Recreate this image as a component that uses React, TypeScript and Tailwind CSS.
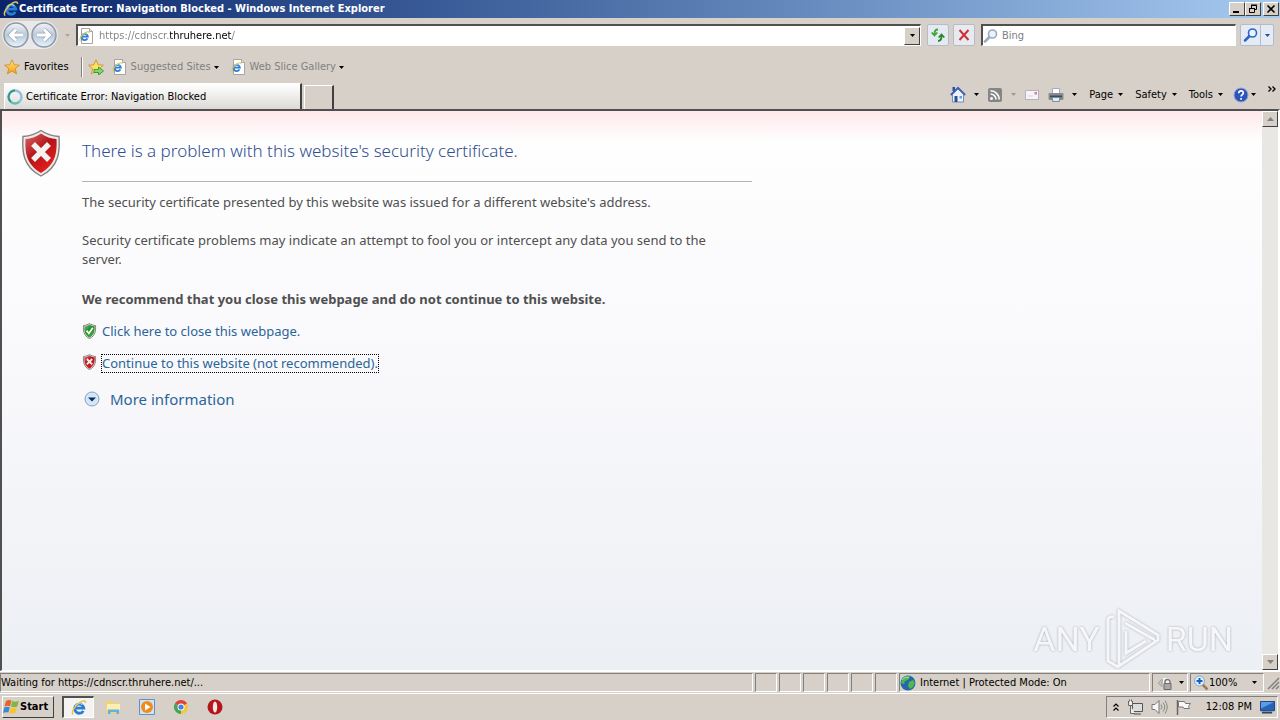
import type { ReactNode } from 'react';

const raised =
  'border border-t-white border-l-white border-r-[#404040] border-b-[#404040] bg-[#d6d0c8]';
const sunken =
  'border border-t-[#808080] border-l-[#808080] border-r-white border-b-white';

function Caret({ className = 'text-black' }: { className?: string }) {
  return (
    <svg aria-hidden="true" className={`shrink-0 ${className}`} width="5" height="3" viewBox="0 0 5 3">
      <path d="M0 0h5L2.5 3z" fill="currentColor" />
    </svg>
  );
}

function IeLogo({ size = 14 }: { size?: number }) {
  return (
    <svg aria-hidden="true" className="shrink-0" width={size} height={size} viewBox="0 0 16 16">
      <path
        d="M12.3 10.800a4.600 4.600 0 1 1 .5-2.600H4.500"
        fill="none"
        stroke="#2a7fd4"
        strokeWidth="2.800"
      />
      <path d="M4 6.200a4.600 4.600 0 0 1 7.400-1.400" fill="none" stroke="#8fd0f8" strokeWidth="1.200" />
      <path
        d="M2.200 14.600C-.6 13 4 5 9.400 2.200c3-1.600 5.600-1.600 5 .8"
        fill="none"
        stroke="#f0c04c"
        strokeWidth="1.500"
      />
    </svg>
  );
}

function IePage() {
  return (
    <span className="relative block size-4 shrink-0">
      <svg aria-hidden="true" className="absolute inset-0" width="16" height="16" viewBox="0 0 16 16">
        <path d="M2.500.5h8l3 3v12h-11z" fill="#fff" stroke="#a5a5a5" />
        <path d="M10.500.5v3h3" fill="#e4e4e4" stroke="#a5a5a5" />
      </svg>
      <span className="absolute top-[3px] left-0">
        <IeLogo size={11} />
      </span>
    </span>
  );
}

function Shield({
  size,
  tone,
}: {
  size: 'lg' | 'sm';
  tone: 'red' | 'green';
}) {
  const id = `shield-${size}-${tone}`;
  return (
    <svg
      aria-hidden="true"
      className={size === 'lg' ? 'h-12 w-10 shrink-0' : 'mb-0.5 h-4 w-[15px] shrink-0'}
      viewBox="0 0 40 48"
    >
      <defs>
        <linearGradient id={id} x1="0" y1="0" x2=".7" y2="1">
          <stop offset="0" stopColor={tone === 'red' ? '#d96a6a' : '#7cc07c'} />
          <stop offset=".5" stopColor={tone === 'red' ? '#b51218' : '#1f8a24'} />
          <stop offset="1" stopColor={tone === 'red' ? '#e8211c' : '#3cb43c'} />
        </linearGradient>
      </defs>
      <path
        d="M20 1.500C25 5 31 7 38 7.500c1 14 .5 30-18 39.500C1.500 37.500 1 21.500 2 7.500 9 7 15 5 20 1.500z"
        fill="#eceaea"
        stroke="#85827f"
        strokeWidth={size === 'lg' ? 1.4 : 3}
      />
      <path
        d="M20 4.500C25 8 30 9.500 35.500 10c.6 12 0 25-15.500 34C4.500 35 4 22 4.500 10 10 9.500 15 8 20 4.500z"
        fill={`url(#${id})`}
      />
      {tone === 'red' ? (
        <path d="M12 15l16 16M28 15L12 31" stroke="#f4f1f1" strokeWidth="5.500" />
      ) : (
        <path d="M11 23l7 8L30 14" fill="none" stroke="#fff" strokeWidth="5" />
      )}
    </svg>
  );
}

function Star({ arrow = false }: { arrow?: boolean }) {
  return (
    <svg aria-hidden="true" className="shrink-0" width="16" height="16" viewBox="0 0 16 16">
      <defs>
        <linearGradient id="star" x1="0" y1="0" x2="0" y2="1">
          <stop offset="0" stopColor="#ffe98a" />
          <stop offset="1" stopColor="#f49a12" />
        </linearGradient>
      </defs>
      <path
        d="M8 .8l2.100 5 5.300.4-4.100 3.400 1.300 5.300L8 12l-4.600 2.900 1.300-5.300L.6 6.200l5.300-.4z"
        fill={arrow ? '#fbe26a' : 'url(#star)'}
        stroke="#d08a18"
        strokeWidth=".8"
      />
      {arrow && (
        <path
          d="M6 10.500h4.500V8l5 4-5 4v-2.500H6z"
          fill="#7fdc62"
          stroke="#2a8a22"
          strokeWidth=".8"
        />
      )}
    </svg>
  );
}

function NavButton({ forward = false }: { forward?: boolean }) {
  const arrow = forward
    ? 'M7 14h12M14 8.500l5.500 5.500-5.500 5.500'
    : 'M21 14H9M14 8.500L8.500 14l5.500 5.500';
  return (
    <button
      type="button"
      aria-label={forward ? 'Forward' : 'Back'}
      className="size-7 shrink-0"
    >
      <svg aria-hidden="true" width="28" height="28" viewBox="0 0 28 28">
        <defs>
          <linearGradient id="orb" x1="0" y1="0" x2="0" y2="1">
            <stop offset="0" stopColor="#f2f4f8" />
            <stop offset=".5" stopColor="#bcc9d8" />
            <stop offset="1" stopColor="#e6f5fd" />
          </linearGradient>
        </defs>
        <circle cx="14" cy="14" r="12" fill="url(#orb)" stroke="#8f97a6" strokeWidth="1.500" />
        <path d={arrow} fill="none" stroke="#9aa8b8" strokeWidth="4.500" />
        <path d={arrow} fill="none" stroke="#fff" strokeWidth="3" />
      </svg>
    </button>
  );
}

function Magnifier({ color }: { color: string }) {
  return (
    <svg aria-hidden="true" className="shrink-0" width="16" height="16" viewBox="0 0 16 16">
      <path d="M6.500 9L2 13.500" stroke={color} strokeWidth="2.500" strokeLinecap="round" />
      <circle cx="9.500" cy="6" r="4" fill="#e8f3fc" stroke={color} strokeWidth="1.600" />
    </svg>
  );
}

function TitleBar() {
  return (
    <header className="flex h-[18px] items-center bg-linear-to-r from-[#0a246a] to-[#a6caf0] pr-px pl-[3px]">
      <IeLogo size={16} />
      <h1 className="flex-1 truncate font-[DejaVu_Sans_Condensed,sans-serif] text-[11px] leading-4 font-bold text-white">
        Certificate Error: Navigation Blocked - Windows Internet Explorer
      </h1>
      <button type="button" aria-label="Minimize" className={`h-[14px] w-4 ${raised}`}>
        <svg aria-hidden="true" width="14" height="12" viewBox="0 0 14 12">
          <path d="M3 8h6v2H3z" />
        </svg>
      </button>
      <button type="button" aria-label="Restore" className={`h-[14px] w-4 ${raised}`}>
        <svg aria-hidden="true" width="14" height="12" viewBox="0 0 14 12">
          <path
            d="M5.500 5V2.500h5v4H9M5 2h6M3.500 5.500h5v4h-5zM3 5.500h6"
            fill="none"
            stroke="#000"
          />
        </svg>
      </button>
      <button type="button" aria-label="Close" className={`ml-0.5 h-[14px] w-4 ${raised}`}>
        <svg aria-hidden="true" width="14" height="12" viewBox="0 0 14 12">
          <path d="M3.500 2.500l7 7M10.500 2.500l-7 7" stroke="#000" strokeWidth="1.600" />
        </svg>
      </button>
    </header>
  );
}

function AddressRow() {
  return (
    <div className="flex h-9 items-center pr-1.5 pb-0.5 pl-0.5">
      <div className="flex rounded-full bg-[#e9e9ea]">
        <NavButton />
        <NavButton forward />
      </div>
      <button type="button" aria-label="Recent pages" className="flex w-[18px] justify-center">
        <Caret className="text-[#aaa6a0]" />
      </button>
      <div className="flex h-[22px] min-w-0 flex-1 items-center border-t-2 border-r border-b border-l-2 border-t-[#505050] border-r-white border-b-white border-l-[#505050] bg-white pl-px">
        <IePage />
        {/* host part is darker than the rest of the URL */}
        <input
          aria-label="Address"
          defaultValue="https://cdnscr.thruhere.net/"
          className="ml-1 h-[18px] min-w-0 flex-1 bg-[linear-gradient(to_right,#808080_71px,#000_71px,#000_133px,#808080_133px)] bg-clip-text leading-[18px] text-transparent outline-none"
        />
        <button
          type="button"
          aria-label="Show address list"
          className={`flex h-[18px] w-4 items-center justify-center ${raised}`}
        >
          <Caret />
        </button>
      </div>
      <button
        type="button"
        aria-label="Refresh"
        className="ml-1.5 flex size-[22px] items-center justify-center rounded-xs border border-[#b3bccb] bg-[#e4eaf2]"
      >
        <svg aria-hidden="true" width="16" height="16" viewBox="0 0 16 16">
          <path
            d="M8 2.500Q4.500 2.500 4.500 7M1.700 5.500l2.800 3 2.800-3"
            fill="none"
            stroke="#3fa535"
            strokeWidth="1.800"
          />
          <path
            d="M8 14q3.500 0 3.500-5M8.700 10.500l2.800-3 2.800 3"
            fill="none"
            stroke="#26852a"
            strokeWidth="1.800"
          />
        </svg>
      </button>
      <button
        type="button"
        aria-label="Stop"
        className="ml-1 flex size-[22px] items-center justify-center rounded-xs border border-[#b3bccb] bg-[#e9e9f0]"
      >
        <svg aria-hidden="true" width="14" height="14" viewBox="0 0 14 14">
          <path d="M2.500 2l9 10M11.500 2l-9 10" stroke="#cc3238" strokeWidth="2" />
        </svg>
      </button>
      <div className="ml-1.5 flex h-[22px] w-[255px] items-center border-t-2 border-r border-b border-l-2 border-t-[#505050] border-r-white border-b-white border-l-[#505050] bg-white">
        <Magnifier color="#9aaabd" />
        <input
          aria-label="Search"
          placeholder="Bing"
          className="ml-[3px] h-[18px] min-w-0 flex-1 leading-[18px] outline-none placeholder:text-[#808080]"
        />
      </div>
      <div className="ml-1 flex h-[22px] rounded-xs border border-[#b3bccb] bg-[#e4ebf5]">
        <button
          type="button"
          aria-label="Search"
          className="flex w-5 items-center justify-center border-r border-[#b3bccb]"
        >
          <Magnifier color="#2c63c8" />
        </button>
        <button
          type="button"
          aria-label="Search options"
          className="flex w-3 items-center justify-center"
        >
          <Caret className="text-[#1f4f9c]" />
        </button>
      </div>
    </div>
  );
}

function FavoritesBar() {
  return (
    <nav aria-label="Favorites" className="flex h-[26px] items-center pl-1">
      <button type="button" className="flex items-center gap-1">
        <Star />
        Favorites
      </button>
      <span className="ml-3 h-5 w-0.5 border-r border-l border-r-white border-l-[#808080]" />
      <button type="button" aria-label="Add to Favorites Bar" className="ml-[5px]">
        <Star arrow />
      </button>
      <button type="button" className="ml-2 flex items-center gap-[3px] text-[#808080]">
        <IePage />
        Suggested Sites
        <Caret />
      </button>
      <button type="button" className="ml-3 flex items-center gap-[3px] text-[#808080]">
        <IePage />
        Web Slice Gallery
        <Caret />
      </button>
    </nav>
  );
}

function MenuButton({ children }: { children: ReactNode }) {
  return (
    <button type="button" className="flex items-center gap-[5px]">
      {children}
      <Caret />
    </button>
  );
}

function TabRow() {
  return (
    <div className="flex h-[29px] items-end pl-1">
      <div role="tablist" className="flex items-end">
        <button
          type="button"
          role="tab"
          aria-selected="true"
          className="flex h-[26px] w-[298px] items-center gap-[3px] border-t border-r-2 border-l border-t-white border-r-[#404040] border-l-white bg-linear-to-b from-white to-[#dcdad6] pl-0.5"
        >
          <svg aria-hidden="true" width="16" height="16" viewBox="0 0 16 16">
            <circle cx="8" cy="8" r="6.500" fill="none" stroke="#8fc4dc" strokeWidth="2.500" />
            <path d="M8 1.500a6.500 6.500 0 0 0-4 11.500" fill="none" stroke="#35968c" strokeWidth="2" />
            <path d="M4 13a6.500 6.500 0 0 0 8 0" fill="none" stroke="#5cc0a8" strokeWidth="2" />
          </svg>
          Certificate Error: Navigation Blocked
        </button>
        <button
          type="button"
          aria-label="New Tab"
          className="ml-0.5 h-6 w-[30px] border-t border-r-2 border-l border-t-white border-r-[#404040] border-l-white"
        />
      </div>
      <div className="ml-auto flex h-[29px] items-center pr-1">
        <button type="button" aria-label="Home" className="flex items-center gap-2">
          <svg aria-hidden="true" width="16" height="17" viewBox="0 0 16 17">
            <path d="M2.500 8v8h11V8L8 3z" fill="#eef3fb" stroke="#7b8db0" />
            <path d="M2.500 1h2.500v4H2.500z" fill="#2c4ea8" />
            <path d="M.8 9L8 1.800 15.200 9" fill="none" stroke="#3a62bd" strokeWidth="1.800" />
            <path d="M4.500 10h3v6h-3z" fill="#2b4f96" />
            <path d="M9.500 10H12v2.500H9.500z" fill="#5aa4dc" />
          </svg>
          <Caret />
        </button>
        <button type="button" aria-label="Feeds" className="ml-2 flex items-center gap-2">
          <svg aria-hidden="true" width="16" height="16" viewBox="0 0 16 16">
            <rect x="1" y="1" width="14" height="14" rx="2" fill="#858585" />
            <circle cx="4.500" cy="11.500" r="1.500" fill="#fff" />
            <path
              d="M3.500 7a5.500 5.500 0 0 1 5.500 5.500M3.500 3.800a8.700 8.700 0 0 1 8.700 8.700"
              fill="none"
              stroke="#fff"
              strokeWidth="1.600"
            />
          </svg>
          <Caret className="text-[#999]" />
        </button>
        <button type="button" aria-label="Read mail" className="ml-2">
          <svg aria-hidden="true" width="16" height="12" viewBox="0 0 16 12">
            <path d="M1.500 1.500h13v9h-13z" fill="#f6f4f8" stroke="#b8b0bc" />
            <path d="M10.500 3h2.500v2.500h-2.500z" fill="#d4808c" />
            <path d="M4 7h5" stroke="#d8d4e0" />
          </svg>
        </button>
        <button type="button" aria-label="Print" className="ml-2 flex items-center gap-2">
          <svg aria-hidden="true" width="16" height="16" viewBox="0 0 16 16">
            <path d="M4.500 1.500h7v5h-7z" fill="#fff" stroke="#a5adba" />
            <rect x=".5" y="6" width="15" height="7" rx="1" fill="#878d96" />
            <path d="M2 8.500h12v2H2z" fill="#454b56" />
            <path d="M4.500 10.500h7v4h-7z" fill="#dcecf9" stroke="#7f8d9c" />
          </svg>
          <Caret />
        </button>
        <div className="ml-3 flex gap-3">
          <MenuButton>Page</MenuButton>
          <MenuButton>Safety</MenuButton>
          <MenuButton>Tools</MenuButton>
        </div>
        <button type="button" aria-label="Help" className="ml-2.5 flex items-center gap-0.5">
          <svg aria-hidden="true" width="16" height="16" viewBox="0 0 16 16">
            <circle cx="8" cy="8" r="7" fill="#2b55bd" stroke="#8fa4cf" />
            <path
              d="M5.700 6.200C5.700 3 10.300 3.200 10.300 6c0 1.600-2.200 1.700-2.200 3.600M8.100 11v1.800"
              fill="none"
              stroke="#fff"
              strokeWidth="1.700"
            />
          </svg>
          <Caret />
        </button>
        <button type="button" aria-label="More commands" className="mb-3 ml-3">
          <svg aria-hidden="true" width="8" height="6" viewBox="0 0 8 6">
            <path d="M.5.500L3 3 .5 5.500M4.500.500L7 3 4.500 5.500" fill="none" stroke="#000" strokeWidth="1.300" />
          </svg>
        </button>
      </div>
    </div>
  );
}

function Watermark() {
  return (
    <div
      aria-hidden="true"
      className="absolute right-[29px] bottom-0 flex items-center gap-1 font-[Roboto,sans-serif] text-[34px] leading-[60px] text-[#f6f7f9] drop-shadow-[0_0_1px_#a8a8b0]"
    >
      <span>ANY</span>
      <svg width="58" height="62" viewBox="0 0 58 62">
        <path
          d="M15 3L54 27v5L15 58zM21 15l30 17M22 23v22l20-12M4 12q0-4 6-3M4 11v42l10 6"
          fill="none"
          stroke="#f6f7f9"
          strokeWidth="3"
        />
      </svg>
      <span>RUN</span>
    </div>
  );
}

function ScrollBar() {
  return (
    <div className="flex w-4 shrink-0 flex-col justify-between bg-[#e9e7e3]">
      {['Scroll up', 'Scroll down'].map((label) => (
        <button
          key={label}
          type="button"
          aria-label={label}
          className={`flex size-4 items-center justify-center text-[#808080] ${raised}`}
        >
          <svg aria-hidden="true" width="7" height="4" viewBox="0 0 7 4">
            <path d={label === 'Scroll up' ? 'M0 4h7L3.500 0z' : 'M0 0h7L3.500 4z'} fill="currentColor" />
          </svg>
        </button>
      ))}
    </div>
  );
}

function ErrorPage() {
  return (
    <main className="relative min-w-0 flex-1 bg-linear-to-b from-white via-[#f8f8fb] to-[#eceff4] font-[Noto_Sans,sans-serif] text-[13px] leading-[19px] text-[#4f4f4f]">
      <div className="flex gap-[21px] bg-linear-to-b from-[#ffe8ea] to-transparent to-[30px] px-[19px] pt-[18px]">
        <Shield size="lg" tone="red" />
        <div className="w-full max-w-[670px]">
          <h2 className="border-b border-[#b0b4b8] pt-2.5 pb-[18px] text-[17px] leading-6 font-light text-[#304f92]">
            There is a problem with this website's security certificate.
          </h2>
          <p className="mt-[11px]">
            The security certificate presented by this website was issued for a different website's
            address.
          </p>
          <p className="mt-[19px] pr-7">
            Security certificate problems may indicate an attempt to fool you or intercept any data
            you send to the server.
          </p>
          <p className="mt-[21px] font-bold">
            We recommend that you close this webpage and do not continue to this website.
          </p>
          <p className="mt-[13px] flex items-center gap-[5px] text-[#2a6598]">
            <Shield size="sm" tone="green" />
            <a href="#close">Click here to close this webpage.</a>
          </p>
          <p className="mt-[13px] flex items-center gap-[5px] text-[#2a6598]">
            <Shield size="sm" tone="red" />
            <a href="#continue" className="leading-[17px] outline outline-dotted outline-black">
              Continue to this website (not recommended).
            </a>
          </p>
          <button
            type="button"
            className="mt-[15px] ml-0.5 flex items-center gap-2.5 text-[15px] leading-6 text-[#2a6598]"
          >
            <svg aria-hidden="true" width="16" height="16" viewBox="0 0 16 16">
              <circle cx="8" cy="8" r="7" fill="#d4e7f8" stroke="#87a0bd" />
              <path d="M4 6.500h8L8 10.500z" fill="#102a5c" />
            </svg>
            More information
          </button>
        </div>
      </div>
      <Watermark />
    </main>
  );
}

function StatusBar() {
  return (
    <footer className="flex h-[22px] items-center gap-0.5 border-t border-white py-px">
      <div className={`h-[19px] flex-1 truncate leading-[17px] ${sunken}`}>
        Waiting for https://cdnscr.thruhere.net/...
      </div>
      {[0, 1, 2, 3, 4, 5].map((pane) => (
        <div key={pane} className={`h-[19px] w-[22px] ${sunken}`} />
      ))}
      <div className={`flex h-[19px] w-[251px] items-center gap-1 ${sunken}`}>
        <svg aria-hidden="true" width="16" height="16" viewBox="0 0 16 16">
          <circle cx="8" cy="8" r="7.500" fill="#2467ae" />
          <path d="M3 2.500c3-2 6-2 7-1L8 5 5 6 4 9 1 8zM9 7l4-2 2 3-2 4-3 2-2-3z" fill="#54b848" />
          <path d="M2 5c2-3 5-3 7-2" fill="none" stroke="#a8d8f4" />
        </svg>
        Internet | Protected Mode: On
      </div>
      <button
        type="button"
        aria-label="InPrivate filtering"
        className={`flex h-[19px] w-9 items-center justify-center gap-1.5 ${sunken}`}
      >
        <svg aria-hidden="true" width="16" height="16" viewBox="0 0 16 16">
          <path d="M1 8l4-4v8zM5 6h4" fill="#c2c0bc" stroke="#a8a6a2" />
          <path d="M6 3h5l2 2v4H6z" fill="#f4f3f1" />
          <path d="M8 8.500V7a2.500 2.500 0 0 1 5 0v1.500" fill="none" stroke="#777" strokeWidth="1.500" />
          <path d="M7 8.500h7v6H7z" fill="#a7a7a7" stroke="#6d6d6d" />
        </svg>
        <Caret />
      </button>
      <button
        type="button"
        className={`flex h-[19px] w-[74px] items-center ${sunken}`}
      >
        <svg aria-hidden="true" className="ml-0.5" width="16" height="16" viewBox="0 0 16 16">
          <path d="M9.500 9.500l5 5" stroke="#a57b4a" strokeWidth="2.500" />
          <circle cx="6.500" cy="6" r="5" fill="#e2f0fc" stroke="#7fa5d4" />
          <path d="M3.500 6h6M6.500 3v6" stroke="#1d5dc0" strokeWidth="2" />
        </svg>
        100%
        <span className="ml-auto pr-1.5">
          <Caret />
        </span>
      </button>
      <svg aria-hidden="true" width="14" height="14" viewBox="0 0 14 14">
        <path d="M2 13L13 2M6 13l7-7M10 13l3-3" stroke="#808080" strokeWidth="1.500" />
      </svg>
    </footer>
  );
}

function TaskBar() {
  return (
    <footer className="flex h-[27px] items-center border-t border-white px-0.5">
      <button
        type="button"
        className={`flex h-[22px] w-[52px] items-center font-[DejaVu_Sans_Condensed,sans-serif] font-bold ${raised}`}
      >
        <svg aria-hidden="true" width="17" height="16" viewBox="0 0 17 16">
          <path d="M3 2c2-1.500 3.500-1.200 5.500-.5L7.200 7.200C5 6.500 3.500 6.500 1.500 7.500z" fill="#e8632b" />
          <path d="M9.300 2c2 1 4 1 6.500-.2L14.300 7.500c-2 1-4 .8-6.300-.1z" fill="#7cb93c" />
          <path d="M1.300 8.500c2-1.200 3.500-1 5.500-.3L5.400 13.600C3.500 13 2 13 0 14z" fill="#3f87d3" />
          <path d="M7.700 8.500c2 1 4 1 6.200 0l-1.500 5.300c-2 1-4 .8-6.200 0z" fill="#f6c42e" />
        </svg>
        Start
      </button>
      <button
        type="button"
        aria-label="Internet Explorer"
        className="ml-2 flex h-[22px] w-8 items-center justify-center border-t-2 border-r border-b border-l-2 border-t-[#505050] border-r-white border-b-white border-l-[#505050] bg-[#f4f3f1]"
      >
        <IeLogo size={16} />
      </button>
      <button type="button" aria-label="Explorer" className="ml-[11px]">
        <svg aria-hidden="true" width="16" height="16" viewBox="0 0 16 16">
          <path d="M1 2h5l1.500 1.500H14V14H1z" fill="#f0d577" />
          <path d="M2 5h13v6H2z" fill="#fbeeb0" />
          <path d="M3 15v-4.500h11V15h-2.500v-2h-6v2z" fill="#65b2df" />
        </svg>
      </button>
      <button type="button" aria-label="Media Player" className="ml-[18px]">
        <svg aria-hidden="true" width="16" height="16" viewBox="0 0 16 16">
          <path d="M.5.500h15v15H.5z" fill="#cfe4f6" stroke="#5b93cc" />
          <circle cx="8" cy="8" r="6" fill="#f48a1c" />
          <path d="M6 4.500v7L11.500 8z" fill="#fff" />
        </svg>
      </button>
      <button type="button" aria-label="Chrome" className="ml-[18px]">
        <svg aria-hidden="true" width="16" height="16" viewBox="0 0 16 16">
          <path d="M8 8L1.900 4.500A7 7 0 0 1 14.100 4.500z" fill="#dc4537" />
          <path d="M8 8l6.100-3.500A7 7 0 0 1 8 15z" fill="#f8c63c" />
          <path d="M8 8v7A7 7 0 0 1 1.900 4.500z" fill="#45a556" />
          <circle cx="8" cy="8" r="3.500" fill="#fff" />
          <circle cx="8" cy="8" r="2.600" fill="#4382e8" />
        </svg>
      </button>
      <button type="button" aria-label="Opera" className="ml-[18px]">
        <svg aria-hidden="true" width="16" height="16" viewBox="0 0 16 16">
          <circle cx="8" cy="8" r="7.500" fill="#b5161b" />
          <ellipse cx="8" cy="8" rx="2.200" ry="5.500" fill="#f6e8e6" />
        </svg>
      </button>
      <div className={`ml-auto flex h-[22px] items-center pr-0.5 pl-1.5 ${sunken}`}>
        <button type="button" aria-label="Show hidden icons">
          <svg aria-hidden="true" width="6" height="8" viewBox="0 0 6 8">
            <path d="M.5 3.500L3 1l2.500 2.500M.5 7.500L3 5l2.500 2.500" fill="none" stroke="#000" strokeWidth="1.200" />
          </svg>
        </button>
        <svg aria-hidden="true" className="ml-2" width="16" height="16" viewBox="0 0 16 16">
          <path d="M5.500 4.500h10v8h-10zM7 15h7" fill="#ddd" stroke="#555" />
          <path d="M1.500 2v4.500h4V2M2.500.500v2M4.500.500v2M3.500 6.500v8H8" fill="#eee" stroke="#666" />
        </svg>
        <svg aria-hidden="true" className="ml-2" width="17" height="16" viewBox="0 0 17 16">
          <path d="M1 5.500h3l4-4v13l-4-4H1z" fill="#f6f6f6" stroke="#777" />
          <path
            d="M10 5.500q2 2.500 0 5M12 3.500q3.500 4.500 0 9M14 1.500q4.500 6.500 0 13"
            fill="none"
            stroke="#888"
          />
        </svg>
        <svg aria-hidden="true" className="ml-2" width="16" height="16" viewBox="0 0 16 16">
          <path d="M1.500 1v15" stroke="#666" strokeWidth="1.500" />
          <path d="M2.500 2.500h6l1 2h5l-2 3 1 2H8l-1-1.500H2.500z" fill="#f8f8f8" stroke="#777" />
        </svg>
        <time className="ml-3.5">12:08 PM</time>
        <button type="button" aria-label="Show desktop" className="ml-2">
          <svg aria-hidden="true" width="15" height="13" viewBox="0 0 16 14">
            <path d="M.5.500h15v10H.5z" fill="#2464bd" stroke="#1b3d7c" />
            <path d="M1 1h14L1 8z" fill="#5b9ce2" />
            <path d="M2 12.500h11" stroke="#33465f" strokeWidth="2" />
          </svg>
        </button>
      </div>
    </footer>
  );
}

export default function App() {
  return (
    <div className="flex h-screen flex-col overflow-hidden bg-[#d6d0c8] font-[DejaVu_Sans_Condensed,sans-serif] text-[11px] leading-4 text-black">
      <TitleBar />
      <AddressRow />
      <FavoritesBar />
      <TabRow />
      <div className="flex min-h-0 flex-1 border-t-2 border-r-2 border-b border-l-2 border-t-[#505050] border-r-white border-b-white border-l-[#505050]">
        <ErrorPage />
        <ScrollBar />
      </div>
      <StatusBar />
      <TaskBar />
    </div>
  );
}
